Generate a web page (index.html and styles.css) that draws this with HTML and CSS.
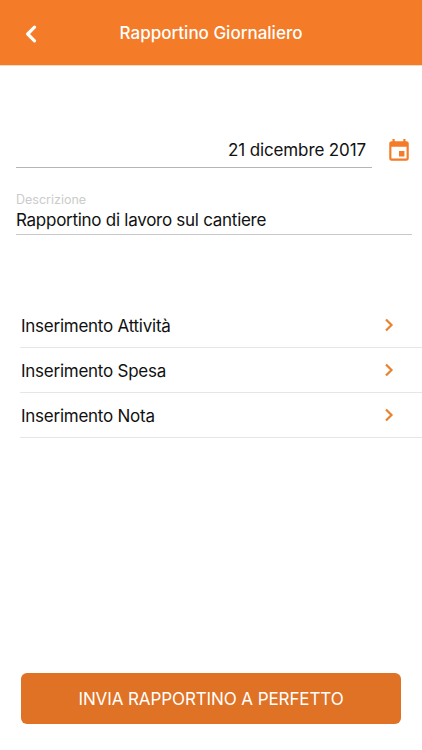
FILE: index.html
```html
<!DOCTYPE html>
<html lang="it">
<head>
<meta charset="utf-8">
<title>Rapportino Giornaliero</title>
<link rel="stylesheet" href="styles.css">
</head>
<body>
<div class="app">
  <header class="nav">
    <svg class="back" width="14" height="18" viewBox="0 0 14 18" aria-hidden="true"><path d="M10.5 2.200 3.700 9l6.800 6.800" fill="none" stroke="#fff" stroke-width="3.200" stroke-linecap="round" stroke-linejoin="round"/></svg>
    <h1 class="title">Rapportino Giornaliero</h1>
  </header>
  <main class="content">
    <section class="date-row">
      <div class="date-field">21 dicembre 2017</div>
      <svg class="cal" width="26" height="26" viewBox="0 0 24 24" aria-hidden="true"><path fill="#F47B27" d="M17 12h-5v5h5v-5zM16 1v2H8V1H6v2H5c-1.110 0-1.990.9-1.990 2L3 19c0 1.100.89 2 2 2h14c1.100 0 2-.9 2-2V5c0-1.100-.9-2-2-2h-1V1h-2zm3 18H5V8h14v11z"/></svg>
    </section>
    <section class="desc">
      <div class="desc-label">Descrizione</div>
      <div class="desc-value">Rapportino di lavoro sul cantiere</div>
    </section>
    <ul class="list">
      <li class="item"><span>Inserimento Attività</span><svg class="chev" width="10" height="14" viewBox="0 0 10 14" aria-hidden="true"><path d="M2 1.500 7.500 7 2 12.500" fill="none" stroke="#E9822F" stroke-width="2.200"/></svg></li>
      <li class="item"><span>Inserimento Spesa</span><svg class="chev" width="10" height="14" viewBox="0 0 10 14" aria-hidden="true"><path d="M2 1.500 7.500 7 2 12.500" fill="none" stroke="#E9822F" stroke-width="2.200"/></svg></li>
      <li class="item"><span>Inserimento Nota</span><svg class="chev" width="10" height="14" viewBox="0 0 10 14" aria-hidden="true"><path d="M2 1.500 7.500 7 2 12.500" fill="none" stroke="#E9822F" stroke-width="2.200"/></svg></li>
    </ul>
    <div class="spacer"></div>
    <button class="send" type="button">INVIA RAPPORTINO A PERFETTO</button>
  </main>
</div>
</body>
</html>
```
FILE: styles.css
```css
* { box-sizing: border-box; }
html, body { margin: 0; padding: 0; height: 100%; background: #fff; }
body { font-family: Inter, "Liberation Sans", sans-serif; color: #111; overflow: hidden; }
.app { width: 422px; height: 750px; display: flex; flex-direction: column; }
.nav { height: 66px; flex: none; background: #F47B27; border-bottom: 1px solid #f9d9c0; display: flex; align-items: center; padding: 0 0 0 24px; position: relative; }
.back { display: block; margin-top: 2px; }
.title { position: absolute; left: 0; right: 0; text-align: center; margin: 0; font-size: 17px; font-weight: 500; color: #fff; line-height: 66px; }
.content { flex: 1; display: flex; flex-direction: column; padding-top: 66px; }
.date-row { display: flex; align-items: flex-start; padding-left: 16px; }
.date-field { width: 356px; height: 36px; border-bottom: 1px solid #b5b5b5; text-align: right; font-size: 17px; letter-spacing: -0.12px; line-height: 36px; padding-right: 6px; }
.cal { margin: 5.500px 0 0 14px; flex: none; }
.desc { margin: 24px 10px 0 16px; border-bottom: 1px solid #c8c8c8; height: 43px; }
.desc-label { font-size: 12.500px; line-height: 15px; color: #cbcbcb; }
.desc-value { font-size: 17px; letter-spacing: -0.27px; line-height: 26px; }
.list { list-style: none; margin: 68px 0 0 20px; padding: 0; }
.item { height: 45px; border-bottom: 1px solid #e6e6e6; display: flex; align-items: center; justify-content: space-between; padding: 0 28px 0 1px; font-size: 17px; letter-spacing: -0.25px; }
.item span { position: relative; top: 1px; }
.chev { display: block; }
.spacer { flex: 1; }
.send { margin: 0 21px 26px; height: 51px; border: 0; border-radius: 6px; background: #E07225; color: #fff; font-family: inherit; font-size: 17px; font-weight: 400; letter-spacing: -0.1px; padding: 0; }
```
